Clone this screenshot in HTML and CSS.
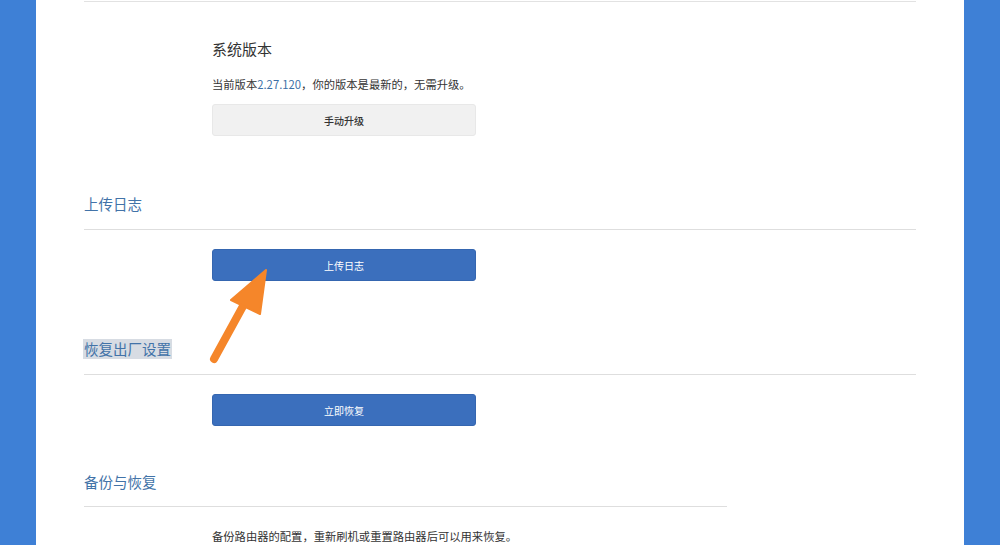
FILE: index.html
```html
<!DOCTYPE html>
<html lang="zh">
<head>
<meta charset="utf-8">
<link rel="stylesheet" href="styles.css">
</head>
<body>
<div class="page">
  <div class="side"></div>
  <main class="main">
    <div class="rule rule-top"></div>
    <div class="sub sub-first">
      <h3 class="sub-title">系统版本</h3>
      <p class="info">当前版本<span class="ver">2.27.120</span>，你的版本是最新的，无需升级。</p>
      <button class="btn btn-gray">手动升级</button>
    </div>

    <h2 class="sec-title">上传日志</h2>
    <div class="rule"></div>
    <div class="sub">
      <button class="btn btn-blue">上传日志</button>
    </div>

    <h2 class="sec-title"><span class="sel">恢复出厂设置</span></h2>
    <div class="rule"></div>
    <div class="sub">
      <button class="btn btn-blue">立即恢复</button>
    </div>

    <h2 class="sec-title sec-last">备份与恢复</h2>
    <div class="rule rule-short"></div>
    <div class="sub">
      <p class="info info-last">备份路由器的配置，重新刷机或重置路由器后可以用来恢复。</p>
    </div>

    <svg class="arrow" width="80" height="110" viewBox="0 0 80 110">
      <line x1="10" y1="95" x2="44" y2="33" stroke="#f5862a" stroke-width="8" stroke-linecap="round"/>
      <polygon points="62,6 27,36 56,50" fill="#f5862a" stroke="#f5862a" stroke-width="2" stroke-linejoin="round"/>
    </svg>
  </main>
  <div class="side"></div>
</div>
</body>
</html>
```
FILE: styles.css
```css
html, body {
  margin: 0;
  padding: 0;
  height: 100%;
  overflow: hidden;
  font-family: "Noto Sans CJK SC", "Noto Sans", "Liberation Sans", sans-serif;
}
.page {
  display: flex;
  width: 1000px;
  height: 545px;
}
.side {
  width: 36px;
  flex: none;
  background: #3e80d6;
}
.main {
  position: relative;
  flex: 1;
  background: #fff;
  padding: 1px 48px 0 48px;
  display: flex;
  flex-direction: column;
  align-items: flex-start;
}
.rule {
  align-self: stretch;
  height: 0;
  border-top: 1px solid #dedede;
}
.rule-top {
  border-top-color: #e2e2e2;
}
.rule-short {
  align-self: flex-start;
  width: 643px;
}
.sub {
  padding-left: 128px;
  display: flex;
  flex-direction: column;
  align-items: flex-start;
  margin-top: 19px;
}
.sub-first {
  margin-top: 37px;
}
.sub-title {
  margin: 0;
  font-size: 15px;
  line-height: 20px;
  font-weight: 400;
  color: #333;
}
.info {
  margin: 16px 0 0 0;
  font-size: 11.3px;
  line-height: 18px;
  color: #333;
}
.info-last {
  margin-top: 1px;
}
.ver {
  color: #3c6fa6;
}
.btn {
  width: 264px;
  height: 32px;
  border-radius: 3px;
  font-family: inherit;
  font-size: 10px;
  padding: 0;
  cursor: pointer;
}
.btn-gray {
  margin-top: 11px;
  background: #f1f1f1;
  border: 1px solid #e8e8e8;
  color: #333;
  font-weight: 500;
}
.btn-blue {
  background: #3b6fbd;
  border: 1px solid #3566b0;
  color: #fff;
}
.sec-title {
  margin: 58px 0 15px 0;
  font-size: 14.5px;
  line-height: 20px;
  font-weight: 400;
  color: #4273a8;
}
.sec-last {
  margin-top: 46px;
  margin-bottom: 14px;
}
.sel {
  display: inline-block;
  background: #d7dce3;
  margin-left: -1px;
  padding: 0 1px 0 1px;
}
.arrow {
  position: absolute;
  left: 168px;
  top: 264px;
}
```
